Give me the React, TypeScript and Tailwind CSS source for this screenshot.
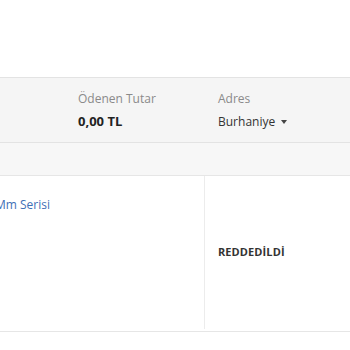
export default function App() {
  return (
    <div className="w-[350px] h-[350px] bg-white overflow-hidden" style={{ fontFamily: '"Open Sans", "Liberation Sans", sans-serif' }}>
      <div className="h-[77px]" />
      <div className="border-t border-[#e3e3e3] bg-[#f5f5f5] h-[65px] grid grid-cols-[64px_140px_146px] pt-[12px]">
        <div />
        <div className="pl-[14px]">
          <div className="text-[12px] leading-[17px] text-[#8a8a8a]">Ödenen Tutar</div>
          <div className="text-[13px] leading-[17px] mt-[6px] font-bold text-[#222]">0,00 TL</div>
        </div>
        <div className="pl-[14px]">
          <div className="text-[12px] leading-[17px] text-[#8a8a8a]">Adres</div>
          <div className="text-[12px] leading-[17px] mt-[6px] text-[#333] flex items-center gap-[6px]">
            <span>Burhaniye</span>
            <span className="w-0 h-0 border-l-[3.5px] border-r-[3.5px] border-t-[4px] border-l-transparent border-r-transparent border-t-[#444]" />
          </div>
        </div>
      </div>
      <div className="border-t border-[#e3e3e3] bg-[#f7f7f7] h-[33px]" />
      <div className="border-t border-b border-[#e6e6e6] h-[157px] flex">
        <div className="w-[204px] overflow-hidden pt-[20px]">
          <div className="ml-[-5px] text-[12px] leading-[17px] text-[#3f6fb6] whitespace-nowrap">Mm Serisi</div>
        </div>
        <div className="flex-1 border-l border-[#ececec] pl-[13px] flex items-center mb-[2px]">
          <span className="text-[11px] font-bold text-[#333] tracking-[0.1px]">REDDEDİLDİ</span>
        </div>
      </div>
    </div>
  );
}
